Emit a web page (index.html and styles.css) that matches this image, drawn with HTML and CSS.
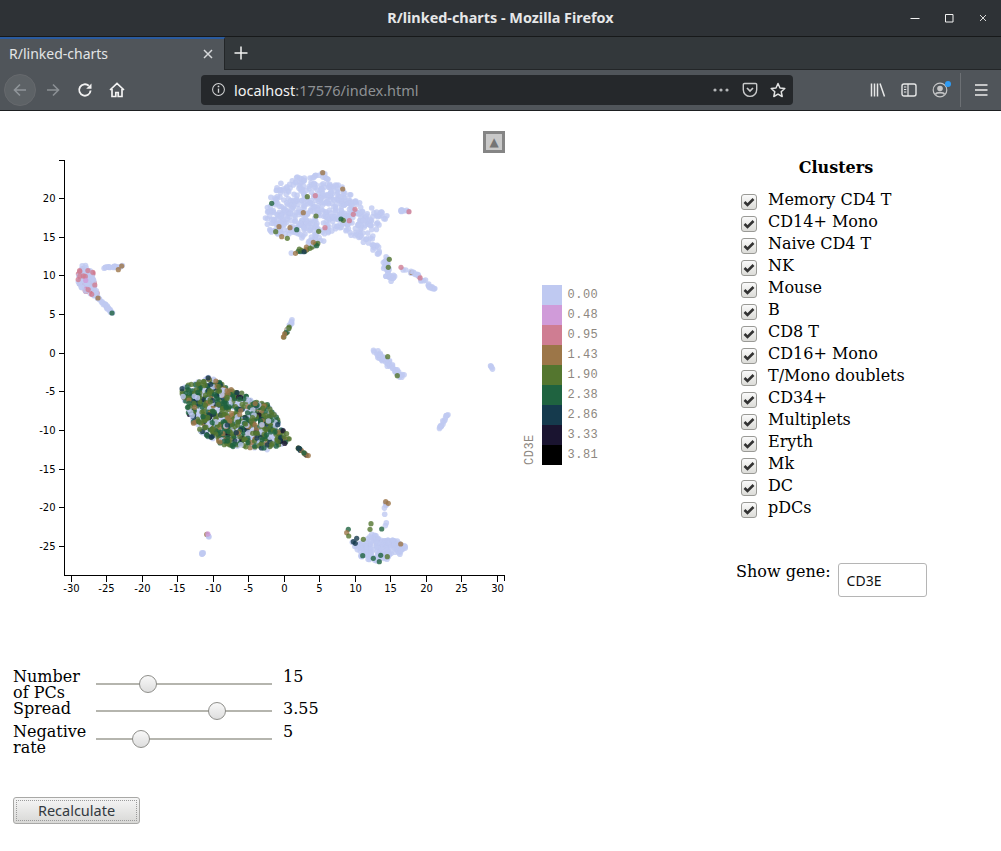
FILE: index.html
```html
<!DOCTYPE html>
<html lang="en">
<head>
<meta charset="utf-8">
<title>R/linked-charts</title>
<link rel="stylesheet" href="styles.css">
</head>
<body>
<header class="browser">
  <div class="titlebar">
    <span class="window-title">R/linked-charts - Mozilla Firefox</span>
    <div class="window-controls">
      <svg class="win-icon" viewBox="0 0 12 12"><path d="M1.5 6.5h9" stroke="#f2f2f2" stroke-width="1"/></svg>
      <svg class="win-icon" viewBox="0 0 12 12"><path d="M2.5 2.5h7.5v7.5h-7.5z" fill="none" stroke="#f2f2f2" stroke-width="1"/></svg>
      <svg class="win-icon" viewBox="0 0 12 12"><path d="M3 3l6 6M9 3l-6 6" stroke="#d8d8d8" stroke-width="1"/></svg>
    </div>
  </div>
  <div class="tabbar">
    <div class="tab">
      <span class="tab-title">R/linked-charts</span>
      <svg class="tab-close" viewBox="0 0 12 12"><path d="M2 2l8 8M10 2l-8 8" stroke="#d6d8da" stroke-width="1.5"/></svg>
    </div>
    <svg class="new-tab" viewBox="0 0 16 16"><path d="M8 1.500v13M1.500 8h13" stroke="#f4f4f4" stroke-width="1.500"/></svg>
  </div>
  <div class="toolbar">
    <div class="nav-group">
      <span class="nav-button back">
        <svg class="icon" viewBox="0 0 16 16"><path d="M14 8H2.500M8 2.500L2.500 8 8 13.500" fill="none" stroke="#90959a" stroke-width="1.600"/></svg>
      </span>
      <span class="nav-button">
        <svg class="icon" viewBox="0 0 16 16"><path d="M2 8h11.500M8 2.500L13.500 8 8 13.500" fill="none" stroke="#8b9094" stroke-width="1.600"/></svg>
      </span>
      <span class="nav-button">
        <svg class="icon" viewBox="0 0 16 16"><path d="M13.600 8.500A5.700 5.700 0 1 1 11.800 3.800" fill="none" stroke="#f2f2f2" stroke-width="1.900"/><path d="M14.500 1.500v5.300H9.200z" fill="#f2f2f2"/></svg>
      </span>
      <span class="nav-button">
        <svg class="icon" viewBox="0 0 16 16"><path d="M1 8l7-6.500L15 8M3 7v7.500h3.800v-4h2.400v4H13V7" fill="none" stroke="#f2f2f2" stroke-width="1.700"/></svg>
      </span>
    </div>
    <div class="urlbar">
      <svg class="info-icon" viewBox="0 0 16 16"><circle cx="8" cy="8" r="6.300" fill="none" stroke="#d4d5d6" stroke-width="1.100"/><path d="M8 7v4.500" stroke="#d4d5d6" stroke-width="1.400"/><circle cx="8" cy="4.700" r="1" fill="#d4d5d6"/></svg>
      <span class="url"><span class="url-host">localhost</span>:17576/index.html</span>
      <span class="url-actions">
        <svg class="dots" viewBox="0 0 18 6"><circle cx="3" cy="3" r="1.600" fill="#b4b6b8"/><circle cx="9" cy="3" r="1.600" fill="#b4b6b8"/><circle cx="15" cy="3" r="1.600" fill="#b4b6b8"/></svg>
        <svg class="icon" viewBox="0 0 16 16"><path d="M2.500 1.500h11a1.200 1.200 0 0 1 1.200 1.200v5a6.700 6.700 0 0 1-13.400 0v-5a1.200 1.200 0 0 1 1.200-1.200z" fill="none" stroke="#c9cacb" stroke-width="1.400"/><path d="M5 6l3 3 3-3" fill="none" stroke="#c9cacb" stroke-width="1.700"/></svg>
        <svg class="icon" viewBox="0 0 16 16"><path d="M8 1.500l2 4.500 4.800.5-3.600 3.200 1 4.800L8 12.100l-4.200 2.400 1-4.800L1.200 6.500 6 6z" fill="none" stroke="#e2e3e3" stroke-width="1.500" stroke-linejoin="round"/></svg>
      </span>
    </div>
    <div class="tools">
      <svg class="icon" viewBox="0 0 16 16"><path d="M1.500 1.500v13M4.500 1.500v13M7.500 1.500v13M10 1.500l4.500 13" fill="none" stroke="#e6e7e7" stroke-width="1.500"/></svg>
      <svg class="icon" viewBox="0 0 16 16"><rect x="1" y="2" width="14" height="12" rx="2" fill="none" stroke="#e6e7e7" stroke-width="1.400"/><path d="M7 2v12M3 5h2.300M3 7.500h2.300M3 10h2.300" fill="none" stroke="#e6e7e7" stroke-width="1.200"/></svg>
      <span class="account">
        <svg class="icon" viewBox="0 0 16 16"><circle cx="8" cy="8" r="6.800" fill="none" stroke="#c4c5c6" stroke-width="1.200"/><circle cx="8" cy="6.500" r="2.800" fill="#c4c5c6"/><path d="M3.500 12.500c1-2.500 8-2.500 9 0" fill="none" stroke="#c4c5c6" stroke-width="1.600"/></svg>
        <span class="account-dot"></span>
      </span>
      <span class="tool-separator"></span>
      <svg class="icon" viewBox="0 0 16 16"><path d="M2 3h12.500M2 8h12.500M2 13h12.500" stroke="#ececec" stroke-width="1.700"/></svg>
    </div>
  </div>
</header>

<main class="page">
  <div class="upper">
    <section class="chart-area">
      <svg id="chart" class="chart" viewBox="0 111 724 500" aria-label="UMAP scatter plot coloured by CD3E"></svg>
      <button class="collapse" type="button" aria-label="Collapse">▲</button>
    </section>
    <aside class="sidebar">
      <h3 class="clusters-title">Clusters</h3>
      <ul class="clusters">
        <li><input type="checkbox" checked><span>Memory CD4 T</span></li>
        <li><input type="checkbox" checked><span>CD14+ Mono</span></li>
        <li><input type="checkbox" checked><span>Naive CD4 T</span></li>
        <li><input type="checkbox" checked><span>NK</span></li>
        <li><input type="checkbox" checked><span>Mouse</span></li>
        <li><input type="checkbox" checked><span>B</span></li>
        <li><input type="checkbox" checked><span>CD8 T</span></li>
        <li><input type="checkbox" checked><span>CD16+ Mono</span></li>
        <li><input type="checkbox" checked><span>T/Mono doublets</span></li>
        <li><input type="checkbox" checked><span>CD34+</span></li>
        <li><input type="checkbox" checked><span>Multiplets</span></li>
        <li><input type="checkbox" checked><span>Eryth</span></li>
        <li><input type="checkbox" checked><span>Mk</span></li>
        <li><input type="checkbox" checked><span>DC</span></li>
        <li><input type="checkbox" checked><span>pDCs</span></li>
      </ul>
      <label class="gene">
        <span class="gene-label">Show gene:</span>
        <input class="gene-input" type="text" value="CD3E">
      </label>
    </aside>
  </div>

  <section class="sliders">
    <span class="slider-label">Number of PCs</span>
    <input class="slider" type="range" min="1" max="52" value="15">
    <span class="slider-value">15</span>

    <span class="slider-label">Spread</span>
    <input class="slider" type="range" min="0" max="5" step="0.01" value="3.55">
    <span class="slider-value">3.55</span>

    <span class="slider-label">Negative rate</span>
    <input class="slider" type="range" min="0" max="22" value="5">
    <span class="slider-value">5</span>
  </section>

  <button class="recalculate" type="button"><span class="recalculate-inner">Recalculate</span></button>
</main>
<script src="chart.js"></script>
</body>
</html>
```

FILE: styles.css
```css
* { box-sizing: border-box; }

html, body {
  margin: 0;
  height: 851px;
  overflow: hidden;
  background: #fff;
}

body {
  font-family: "DejaVu Serif", serif;
  font-size: 16px;
  color: #000;
}

/* Browser chrome */
.browser {
  font-family: "Noto Sans", "Open Sans", sans-serif;
  color: #f2f2f2;
}

.titlebar {
  position: relative;
  height: 37px;
  display: flex;
  align-items: center;
  justify-content: center;
  padding-bottom: 1px;
  background: #2e3236;
  border-bottom: 1px solid #17191a;
}

.window-title {
  font-size: 14.400px;
  font-weight: 700;
  color: #e6e7e8;
}

.window-controls {
  position: absolute;
  right: 12px;
  top: 12px;
  display: flex;
  gap: 22px;
}

.win-icon { width: 12px; height: 12px; display: block; }

.tabbar {
  height: 33px;
  display: flex;
  align-items: center;
  background: #33383b;
  border-bottom: 1px solid #232628;
}

.tab {
  width: 225px;
  height: 33px;
  display: flex;
  align-items: center;
  justify-content: space-between;
  padding: 0 10px 1px 9px;
  background: #50555a;
  border-top: 2px solid #2a5b9f;
  border-right: 1px solid #232628;
}

.tab-title { font-size: 14px; color: #e3e5e6; }
.tab-close { width: 12px; height: 12px; }
.new-tab { width: 16px; height: 16px; margin-left: 8px; }

.toolbar {
  height: 41px;
  display: flex;
  align-items: center;
  padding: 0 0 1px 4px;
  background: #50555a;
  border-bottom: 1px solid #1d1f21;
}

.nav-group {
  width: 197px;
  display: flex;
  align-items: center;
}

.nav-button {
  width: 32px;
  height: 32px;
  display: flex;
  align-items: center;
  justify-content: center;
}

.nav-button.back {
  background: #5d6266;
  border: 1px solid #66696d;
  border-radius: 50%;
  margin-right: 1px;
}

.icon { width: 16px; height: 16px; display: block; flex: none; }

.urlbar {
  width: 592px;
  height: 30px;
  display: flex;
  align-items: center;
  padding: 0 7px 0 10px;
  background: #25282b;
  border-radius: 4px;
}

.info-icon { width: 15px; height: 15px; flex: none; }

.url {
  margin-left: 8px;
  font-size: 14.500px;
  color: #8e9194;
}

.url-host { color: #f2f2f2; }

.url-actions {
  margin-left: auto;
  display: flex;
  align-items: center;
  gap: 12px;
}

.dots { width: 18px; height: 6px; }

.tools {
  flex: 1;
  display: flex;
  align-items: center;
  gap: 15px;
  padding-left: 77px;
}

.account { position: relative; display: block; }

.account-dot {
  position: absolute;
  top: -1px;
  right: -3px;
  width: 6px;
  height: 6px;
  border-radius: 50%;
  background: #2f9cf5;
}

.tool-separator {
  width: 1px;
  height: 34px;
  margin: 0 -3px 0 -3px;
  background: #6c7074;
}

/* Page */
.upper {
  display: flex;
  height: 557px;
}

.chart-area {
  position: relative;
  width: 724px;
  flex: none;
}

.chart {
  display: block;
  width: 724px;
  height: 500px;
}

.axis-line { stroke: #000; stroke-width: 1; fill: none; shape-rendering: crispEdges; }
.tick-label { font-family: "DejaVu Sans", sans-serif; font-size: 10px; fill: #000; }
.legend-label { font-family: "Liberation Mono", monospace; font-size: 12px; letter-spacing: 0.500px; fill: #8d8780; }

.collapse {
  position: absolute;
  left: 483px;
  top: 20px;
  width: 22px;
  height: 22px;
  padding: 0;
  background: #c9c9c9;
  border: 3px solid #858585;
  color: #757575;
  font-size: 12px;
  line-height: 15px;
  font-family: "DejaVu Sans", sans-serif;
}

.sidebar {
  width: 200px;
  margin-left: 12px;
  padding-top: 47px;
}

.clusters-title {
  margin: 0;
  height: 20px;
  font-size: 16px;
  line-height: 20px;
  font-weight: 700;
  text-align: center;
}

.clusters {
  list-style: none;
  margin: 11px 0 0;
  padding: 0 0 0 5px;
}

.clusters li {
  height: 22px;
  display: flex;
  align-items: center;
  line-height: 22px;
}

.clusters input {
  appearance: none;
  -webkit-appearance: none;
  width: 16px;
  height: 16px;
  margin: 3px 11px 0 0;
  flex: none;
  border: 1px solid #9a9a96;
  border-radius: 3px;
  background: url("data:image/svg+xml;utf8,<svg xmlns='http://www.w3.org/2000/svg' viewBox='0 0 16 16'><path d='M3.500 8l3 3 6-6' fill='none' stroke='%23333' stroke-width='2.600'/></svg>") center / 16px 16px no-repeat, linear-gradient(#fafafa, #dcdcd8);
}

.gene {
  display: flex;
  align-items: flex-start;
  margin-top: 44px;
}

.gene-label { line-height: 17px; }

.gene-input {
  width: 89px;
  height: 34px;
  margin-left: 7px;
  padding: 0 8px;
  border: 1px solid #b5b5b5;
  border-radius: 3px;
  background: #fff;
  font-family: "Noto Sans", "Open Sans", sans-serif;
  font-size: 14px;
  color: #111;
  outline: none;
}

/* Sliders */
.sliders {
  display: grid;
  grid-template-columns: 72px 176px auto;
  column-gap: 11px;
  align-items: center;
  justify-content: start;
  margin-left: 13px;
  line-height: 16px;
}

.slider-label,
.slider-value {
  align-self: start;
  margin: 1px 0 -1px;
}

.slider {
  appearance: none;
  -webkit-appearance: none;
  width: 176px;
  height: 22px;
  margin: 0 0 1px;
  background: transparent;
}

.slider::-webkit-slider-runnable-track { height: 2px; background: #b5b5ae; }
.slider::-moz-range-track { height: 2px; background: #b5b5ae; }

.slider::-webkit-slider-thumb {
  -webkit-appearance: none;
  width: 18px;
  height: 18px;
  margin-top: -8px;
  border: 1px solid #8e8e8a;
  border-radius: 50%;
  background: linear-gradient(#f8f8f8, #dedede);
}

.slider::-moz-range-thumb {
  width: 18px;
  height: 18px;
  border: 1px solid #8e8e8a;
  border-radius: 50%;
  background: linear-gradient(#f8f8f8, #dedede);
}

.recalculate {
  display: block;
  width: 127px;
  height: 27px;
  margin: 42px 0 0 13px;
  padding: 2px;
  border: 1px solid #a8a8a6;
  border-radius: 3px;
  background: linear-gradient(#f6f6f6, #d8d8d6);
  font-family: "Noto Sans", "Open Sans", sans-serif;
  font-size: 14.500px;
  color: #33393f;
}

.recalculate-inner {
  display: block;
  height: 21px;
  line-height: 19px;
  border: 1px dotted #9a9a9a;
}
```

FILE: chart.js
```js
(function () {
  var NS = 'http://www.w3.org/2000/svg';
  var svg = document.getElementById('chart');
  var seed = 12345;
  function rnd() {
    seed = (seed * 1664525 + 1013904223) % 4294967296;
    return seed / 4294967296;
  }
  function el(name, attrs, text) {
    var node = document.createElementNS(NS, name);
    for (var k in attrs) node.setAttribute(k, attrs[k]);
    if (text !== undefined) node.textContent = text;
    svg.appendChild(node);
    return node;
  }

  var COLORS = ['#bfc9f1', '#d09bd9', '#cf7d92', '#9c7648', '#54762f', '#1f6340', '#153a4d', '#1a1430', '#000000'];
  var LEVELS = ['0.00', '0.48', '0.95', '1.43', '1.90', '2.38', '2.86', '3.33', '3.81'];

  function pick(weights) {
    var total = 0, i;
    for (i = 0; i < weights.length; i++) total += weights[i];
    var r = rnd() * total;
    for (i = 0; i < weights.length; i++) {
      r -= weights[i];
      if (r <= 0) return COLORS[i];
    }
    return COLORS[0];
  }
  function dot(x, y, color) {
    var light = color === COLORS[0];
    el('circle', { cx: x.toFixed(1), cy: y.toFixed(1), r: light ? 2.8 : 2.6, fill: color, 'fill-opacity': 0.8 });
  }
  function inside(poly, x, y) {
    var hit = false;
    for (var i = 0, j = poly.length - 1; i < poly.length; j = i++) {
      var a = poly[i], b = poly[j];
      if ((a[1] > y) !== (b[1] > y) && x < (b[0] - a[0]) * (y - a[1]) / (b[1] - a[1]) + a[0]) hit = !hit;
    }
    return hit;
  }
  function blob(poly, n, weights) {
    var xs = poly.map(function (p) { return p[0]; });
    var ys = poly.map(function (p) { return p[1]; });
    var x0 = Math.min.apply(null, xs), x1 = Math.max.apply(null, xs);
    var y0 = Math.min.apply(null, ys), y1 = Math.max.apply(null, ys);
    for (var c = 0; c < n;) {
      var x = x0 + rnd() * (x1 - x0), y = y0 + rnd() * (y1 - y0);
      if (inside(poly, x, y)) { dot(x, y, pick(weights)); c++; }
    }
  }
  function strand(points, n, spread, weights) {
    for (var c = 0; c < n; c++) {
      var t = rnd() * (points.length - 1);
      var i = Math.min(Math.floor(t), points.length - 2), f = t - i;
      var x = points[i][0] + (points[i + 1][0] - points[i][0]) * f + (rnd() - 0.5) * spread;
      var y = points[i][1] + (points[i + 1][1] - points[i][1]) * f + (rnd() - 0.5) * spread;
      dot(x, y, pick(weights));
    }
  }
  function spots(originX, originY, list) {
    list.forEach(function (s) { dot(originX + s[0] / 3, originY + s[1] / 3, COLORS[s[2]]); });
  }

  var LIGHT = [1];

  /* Top cluster (memory / naive T cells) */
  blob([[265, 218], [268, 200], [278, 183], [293, 177], [310, 175], [322, 170], [328, 178], [342, 187], [357, 200], [370, 207], [385, 213], [393, 213], [385, 220], [378, 226], [372, 240], [355, 238], [340, 228], [330, 235], [322, 243], [305, 243], [295, 232], [280, 238], [270, 232]], 540, LIGHT);
  strand([[355, 235], [373, 245], [386, 262], [388, 275], [393, 280]], 55, 6, LIGHT);
  strand([[400, 267], [416, 275], [430, 286], [436, 291]], 30, 3, [12, 0, 0.5, 0.3]);
  strand([[400, 211], [410, 211]], 9, 2, LIGHT);
  strand([[291, 254], [305, 250], [318, 243]], 18, 3, [3, 0, 0, 2, 2, 1]);
  spots(260, 125, [[142, 215, 4], [166, 212, 2], [168, 273, 4], [57, 305, 3], [90, 308, 3], [47, 320, 4], [65, 335, 3], [82, 340, 4], [110, 314, 5], [176, 319, 4], [248, 192, 3], [188, 143, 3], [250, 286, 4], [268, 287, 2], [285, 253, 2], [195, 308, 2], [388, 403, 4], [385, 427, 4], [423, 427, 2], [447, 260, 2], [118, 372, 4], [150, 370, 4], [170, 362, 5], [132, 380, 6], [160, 352, 3], [35, 235, 5], [130, 263, 3], [243, 282, 5], [280, 268, 2]]);

  /* Left cluster (pink) */
  var LEFT = [[76, 275], [83, 263], [93, 272], [95, 285], [99, 298], [92, 295], [80, 288]];
  blob(LEFT, 42, [1, 0.5, 6]);
  blob(LEFT, 52, LIGHT);
  blob(LEFT, 12, [0, 0.5, 6]);
  strand([[98, 298], [105, 305], [112, 313]], 28, 1.5, LIGHT);
  strand([[103, 268], [112, 267], [122, 266]], 18, 1.5, LIGHT);
  spots(40, 125, [[174, 519, 3], [245, 423, 3], [235, 434, 3], [216, 564, 5]]);

  /* Small strand in the middle */
  strand([[293, 319], [290, 326]], 6, 2, LIGHT);
  strand([[290, 326], [283, 338]], 12, 1.5, [1, 0, 0, 2, 2, 1]);

  /* Main CD3E positive cluster */
  var MAIN = [[181, 388], [207, 377], [217, 380], [227, 388], [243, 392], [253, 402], [267, 403], [277, 417], [280, 427], [291, 438], [284, 447], [267, 450], [253, 448], [230, 447], [207, 438], [193, 423], [183, 400]];
  blob(MAIN, 240, LIGHT);
  blob(MAIN, 700, [1.400, 0, 0, 1, 4.500, 3.200, 1, 0.300]);
  strand([[298, 448], [303, 452], [308, 456]], 14, 1, [0, 0, 0, 2, 2, 2, 2]);

  /* Small pieces */
  strand([[207, 534], [210, 537]], 5, 2, [3, 3, 0, 1]);
  strand([[203, 551], [202, 556]], 5, 1.500, [3, 0, 0, 1]);
  strand([[375, 352], [390, 365], [403, 377]], 55, 5, LIGHT);
  spots(320, 280, [[203, 230, 4], [232, 287, 4]]);
  strand([[490, 365], [493, 369]], 4, 1, LIGHT);
  strand([[440, 429], [444, 420], [448, 413]], 14, 2, LIGHT);

  /* Lower right cluster */
  blob([[350, 541], [363, 543], [373, 533], [383, 540], [397, 540], [406, 547], [400, 555], [377, 563], [363, 559], [352, 545]], 170, LIGHT);
  strand([[386, 527], [384, 507], [387, 502]], 8, 2, LIGHT);
  spots(320, 280, [[85, 748, 5], [80, 758, 3], [86, 768, 4], [100, 785, 6], [106, 790, 6], [110, 775, 6], [130, 778, 4], [153, 731, 4], [150, 748, 4], [185, 747, 5], [160, 835, 5], [178, 845, 5], [182, 826, 5], [202, 830, 4], [242, 792, 3], [128, 827, 5], [197, 665, 3], [205, 670, 3]]);

  /* Axes */
  var Y0 = 352.6, YK = 7.73, X0 = 283.7, XK = 7.1;
  el('path', { class: 'axis-line', d: 'M58.5 160.500H64.500V575.500H504.500V581' });
  for (var v = -25; v <= 20; v += 5) {
    var y = Math.round(Y0 - v * YK) + 0.5;
    el('path', { class: 'axis-line', d: 'M58.500 ' + y + 'H64.500' });
    el('text', { class: 'tick-label', x: 55.500, y: y + 3, 'text-anchor': 'end' }, String(v));
  }
  for (var u = -30; u <= 30; u += 5) {
    var x = Math.round(X0 + u * XK) + 0.5;
    el('path', { class: 'axis-line', d: 'M' + x + ' 575.500V581.500' });
    el('text', { class: 'tick-label', x: x, y: 592, 'text-anchor': 'middle' }, String(u));
  }

  /* Legend */
  COLORS.forEach(function (c, i) {
    var top = 285 + i * 20;
    el('rect', { x: 542, y: top, width: 20, height: 20, fill: c });
    el('text', { class: 'legend-label', x: 567.500, y: top + 13 }, LEVELS[i]);
  });
  el('text', { class: 'legend-label', transform: 'translate(533 465) rotate(-90)' }, 'CD3E');
})();
```
